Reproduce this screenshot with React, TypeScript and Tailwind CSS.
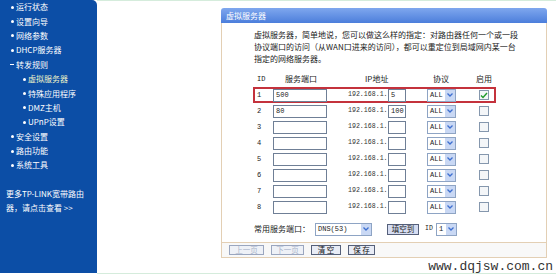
import React from 'react'

const menu: { label: string; sub?: boolean; open?: boolean; active?: boolean }[] = [
  { label: '运行状态' },
  { label: '设置向导' },
  { label: '网络参数' },
  { label: 'DHCP服务器' },
  { label: '转发规则', open: true },
  { label: '虚拟服务器', sub: true, active: true },
  { label: '特殊应用程序', sub: true },
  { label: 'DMZ主机', sub: true },
  { label: 'UPnP设置', sub: true },
  { label: '安全设置' },
  { label: '路由功能' },
  { label: '系统工具' },
]

const rows = [
  { id: 1, port: '500', ip: '5', on: true },
  { id: 2, port: '80', ip: '100', on: false },
  { id: 3, port: '', ip: '', on: false },
  { id: 4, port: '', ip: '', on: false },
  { id: 5, port: '', ip: '', on: false },
  { id: 6, port: '', ip: '', on: false },
  { id: 7, port: '', ip: '', on: false },
  { id: 8, port: '', ip: '', on: false },
]

function Arrow() {
  return (
    <span className="flex h-full w-[10px] items-center justify-center bg-[#c9d8f4]">
      <svg width="6" height="4" viewBox="0 0 6 4">
        <path d="M0.5 0.5 L3 3 L5.5 0.5" fill="none" stroke="#3d6fd0" strokeWidth="1.3" />
      </svg>
    </span>
  )
}

function Select({ value, width }: { value: string; width: string }) {
  return (
    <div className={`flex h-[13px] items-center justify-between border border-[#8ea4c4] bg-white pl-[2px] ${width}`}>
      <span className="font-['Liberation_Mono',monospace] text-[7px] leading-none text-[#222]">{value}</span>
      <Arrow />
    </div>
  )
}

function Field({ value, width }: { value: string; width: string }) {
  return (
    <div className={`flex h-[13px] items-center border border-[#6f7f96] bg-white pl-[2px] font-['Liberation_Mono',monospace] text-[7px] leading-none text-[#222] ${width}`}>
      {value}
    </div>
  )
}

function Check({ on }: { on: boolean }) {
  return (
    <div className="flex h-[10px] w-[10px] items-center justify-center border border-[#8597ad] bg-[#f4f6f8]">
      {on && (
        <svg width="8" height="7" viewBox="0 0 8 7">
          <path d="M1 3.5 L3 5.5 L7 1" fill="none" stroke="#1f9a2a" strokeWidth="1.4" />
        </svg>
      )}
    </div>
  )
}

function Btn({ label, width, disabled }: { label: string; width: string; disabled?: boolean }) {
  return (
    <div
      className={`flex h-[10px] items-center justify-center border text-[7.5px] leading-none ${width} ${
        disabled ? 'border-[#9aa6bf] bg-[#eef1f7] text-[#a9b3c9]' : 'border-[#55607a] bg-[#e8ecf6] text-[#111]'
      }`}
    >
      {label}
    </div>
  )
}

export default function App() {
  return (
    <div className="flex h-[275px] w-[556px] overflow-hidden bg-white font-['Noto_Sans_CJK_SC',sans-serif]">
      {/* left menu */}
      <div className="h-[273px] w-[97px] shrink-0 rounded-tr-[5px] bg-[#0c4ea6] text-[8px] text-white">
        {menu.map((m) => (
          <div key={m.label} className={`flex h-[14.4px] items-center ${m.sub ? 'pl-[20px]' : 'pl-[8px]'}`}>
            <span className="flex w-[8px] items-center justify-center">
              {m.open ? (
                <span className="h-[1px] w-[4px] bg-white" />
              ) : (
                <span className="h-[3px] w-[3px] rounded-full bg-white" />
              )}
            </span>
            <span className={`leading-none ${m.active ? 'text-[#eef4c8]' : 'text-white'}`}>{m.label}</span>
          </div>
        ))}
        <div className="mt-[14px] pl-[6px] text-[8px] leading-[14px]">
          <div>更多TP-LINK宽带路由</div>
          <div>器，请点击查看 &gt;&gt;</div>
        </div>
      </div>

      {/* main area */}
      <div className="flex h-[274px] flex-1 flex-col border-y border-[#d5ecdc] pl-[124px] pt-[7px]">
        <div className="w-[326px]">
          <div className="flex h-[15px] items-center rounded-t-[3px] bg-gradient-to-b from-[#7fa7ee] to-[#4c7edb] pl-[5px] text-[8px] text-white">
            虚拟服务器
          </div>
          <div className="border-x border-[#e3cfb4] bg-white pl-[32px] pr-[10px] pt-[6px] text-[8px] text-[#222]">
            <div className="leading-[12px]">
              <div>虚拟服务器，简单地说，您可以做这么样的指定：对路由器任何一个或一段</div>
              <div>协议端口的访问（从WAN口进来的访问），都可以重定位到局域网内某一台</div>
              <div>指定的网络服务器。</div>
            </div>

            <div className="mt-[6px] flex h-[16px] items-center pl-[2px] leading-none">
              <span className="w-[29px] pl-[1px] font-['Liberation_Mono',monospace] text-[7px]">ID</span>
              <span className="w-[80px]">服务端口</span>
              <span className="w-[68px]">IP地址</span>
              <span className="w-[43px]">协议</span>
              <span>启用</span>
            </div>

            <div className="-ml-[1px] w-[243px]">
              {rows.map((r) => (
                <div
                  key={r.id}
                  className={`flex h-[16px] items-center border-2 ${r.on ? 'border-[#c4323c]' : 'border-transparent'}`}
                >
                  <span className="w-[18px] pl-[2px] font-['Liberation_Mono',monospace] text-[7px] leading-none">{r.id}</span>
                  <Field value={r.port} width="w-[54px]" />
                  <span className="ml-[21px] w-[40px] font-['Liberation_Mono',monospace] text-[6.6px] leading-none text-[#333]">
                    192.168.1.
                  </span>
                  <Field value={r.ip} width="w-[18px]" />
                  <span className="ml-[21px]">
                    <Select value="ALL" width="w-[29px]" />
                  </span>
                  <span className="ml-[23px]">
                    <Check on={r.on} />
                  </span>
                </div>
              ))}
            </div>

            <div className="mt-[6px] flex h-[16px] items-center pb-0 leading-none">
              <span className="w-[61px]">常用服务端口：</span>
              <Select value="DNS(53)" width="w-[57px]" />
              <span className="ml-[15px]">
                <div className="flex h-[11px] w-[32px] items-center justify-center border border-[#55607a] bg-[#d6ddf2] text-[7.5px] leading-none">
                  填空到
                </div>
              </span>
              <span className="ml-[6px] w-[11px] font-['Liberation_Mono',monospace] text-[6.5px]">ID</span>
              <Select value="1" width="w-[21px]" />
            </div>
            <div className="h-[5px]" />
          </div>
          <div className="flex h-[16px] items-center gap-[7px] border border-[#e3cfb4] bg-[#f8f8f8] pl-[7px]">
            <Btn label="上一页" width="w-[35px]" disabled />
            <Btn label="下一页" width="w-[33px]" disabled />
            <Btn label="清 空" width="w-[30px]" />
            <Btn label="保 存" width="w-[27px]" />
          </div>
        </div>
        <div className="mt-[1px] w-[332px] text-right font-['Liberation_Mono',monospace] text-[13px] leading-[15px] text-[#333]">
          www.dqjsw.com.cn
        </div>
      </div>
    </div>
  )
}
